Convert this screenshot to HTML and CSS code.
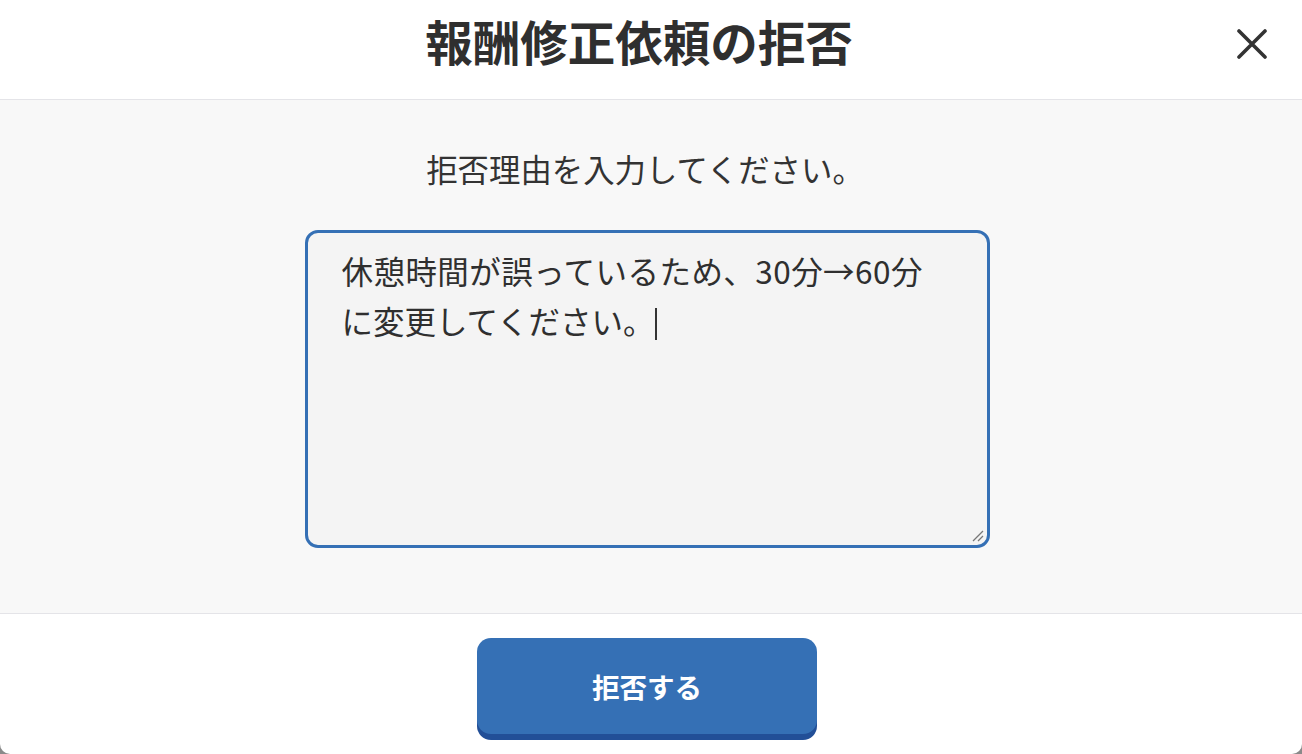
FILE: index.html
```html
<!DOCTYPE html>
<html lang="ja">
<head>
<meta charset="utf-8">
<title>報酬修正依頼の拒否</title>
<link rel="stylesheet" href="styles.css">
</head>
<body>
<div class="modal">
  <header class="modal-header">
    <h1 class="modal-title">報酬修正依頼の拒否</h1>
    <button class="close-btn" aria-label="閉じる">
      <svg width="30" height="30" viewBox="0 0 30 30"><path d="M2 2 L28 28 M28 2 L2 28" stroke="#333" stroke-width="3.6" stroke-linecap="round" fill="none"/></svg>
    </button>
  </header>
  <main class="modal-body">
    <p class="prompt">拒否理由を入力してください。</p>
    <div class="textarea">
      <span class="textarea-text"><span class="line-1">休憩時間が誤っているため、30分→60分</span><br>に変更してください。</span><span class="caret"></span>
      <svg class="resize" width="14" height="14" viewBox="0 0 14 14"><path d="M3 13 L13 3 M8 13 L13 8" stroke="#777" stroke-width="1.3" fill="none"/></svg>
    </div>
  </main>
  <footer class="modal-footer">
    <button class="reject-btn">拒否する</button>
  </footer>
</div>
</body>
</html>
```
FILE: styles.css
```css
* { box-sizing: border-box; }
html, body { margin: 0; padding: 0; }
body {
  background: #8a8a8a;
  font-family: "Noto Sans CJK JP", "Noto Sans", sans-serif;
  color: #333;
}
.modal {
  width: 1302px;
  height: 754px;
  background: #fff;
  border-radius: 0 0 10px 10px;
  overflow: hidden;
  display: flex;
  flex-direction: column;
}
.modal-header {
  position: relative;
  height: 100px;
  border-bottom: 1px solid #e4e4e8;
  display: flex;
  align-items: center;
  justify-content: center;
  padding-right: 24px;
  padding-bottom: 18px;
}
.modal-title {
  margin: 0;
  font-size: 47.5px;
  font-weight: 700;
  line-height: 60px;
  color: #2f2f2f;
}
.close-btn {
  position: absolute;
  right: 35px;
  top: 29px;
  width: 30px;
  height: 30px;
  padding: 0;
  border: 0;
  background: none;
  display: flex;
}
.modal-body {
  height: 514px;
  background: #f8f8f8;
  border-bottom: 1px solid #e4e4e8;
  display: flex;
  flex-direction: column;
  align-items: center;
  padding-top: 49px;
  padding-right: 8px;
}
.prompt {
  margin: 0 0 0 -4px;
  font-size: 31.4px;
  line-height: 40px;
  color: #333;
}
.textarea {
  position: relative;
  margin-top: 41px;
  width: 685px;
  height: 318px;
  border: 3px solid #3570b5;
  border-radius: 13px;
  background: #f4f4f4;
  padding: 12px 20px 0 34px;
  font-size: 31.5px;
  line-height: 50px;
  color: #2f2f2f;
}
.line-1 { letter-spacing: 0.45px; }
.caret {
  display: inline-block;
  width: 2px;
  height: 32px;
  background: #333;
  margin-left: 0;
  vertical-align: -6px;
}
.resize {
  position: absolute;
  right: 3px;
  bottom: 3px;
}
.modal-footer {
  flex: 1;
  display: flex;
  justify-content: center;
  padding-top: 24px;
  padding-right: 8px;
}
.reject-btn {
  width: 340px;
  height: 96px;
  border: 0;
  border-radius: 14px;
  background: #3570b5;
  box-shadow: 0 6px 0 #224f97;
  color: #fff;
  font-family: "Noto Sans CJK JP", "Noto Sans", sans-serif;
  font-size: 27.5px;
  font-weight: 700;
  padding: 0;
}
```
